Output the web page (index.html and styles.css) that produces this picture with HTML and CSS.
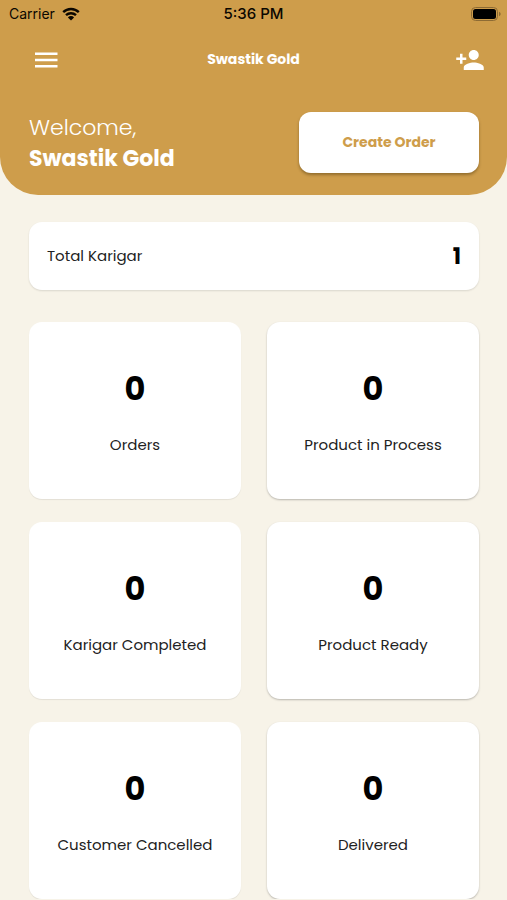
FILE: index.html
```html
<!DOCTYPE html>
<html lang="en">
<head>
<meta charset="utf-8">
<meta name="viewport" content="width=device-width, initial-scale=1">
<title>Swastik Gold</title>
<link rel="stylesheet" href="styles.css">
</head>
<body>
<header class="hero">
  <div class="status">
    <div class="carrier">
      <span>Carrier</span>
      <svg class="wifi" viewBox="0 0 18 14" aria-hidden="true">
        <path d="M1.2 5.2a11.2 11.2 0 0 1 15.6 0M4 8.2a7.2 7.2 0 0 1 10 0" fill="none" stroke="#0b0700" stroke-width="2.4"/>
        <path d="M9 13.4 5.9 10.4a4.4 4.4 0 0 1 6.2 0z" fill="#0b0700"/>
      </svg>
    </div>
    <span class="clock">5:36 PM</span>
    <svg class="battery" viewBox="0 0 30 14" aria-hidden="true">
      <rect x=".5" y=".5" width="26" height="13" rx="4" fill="none" stroke="#8d6b34"/>
      <rect x="2" y="2" width="23" height="10" rx="2.5" fill="#000"/>
      <path d="M28 4.8c2.2.8 2.2 3.6 0 4.4z" fill="#8d6b34"/>
    </svg>
  </div>
  <nav class="appbar">
    <button class="icon-button menu" type="button" aria-label="Menu">
      <svg class="menu-icon" viewBox="0 0 24 16" aria-hidden="true">
        <path d="M1 .5h22.5V3H1zM1 6.7h22.5v2.5H1zM1 13h22.5v2.5H1z" fill="#fff"/>
      </svg>
    </button>
    <h1 class="title">Swastik Gold</h1>
    <button class="icon-button add" type="button" aria-label="Add person">
      <svg class="person-icon" viewBox="1 4 22 16" aria-hidden="true">
        <path d="M15 12c2.21 0 4-1.79 4-4s-1.79-4-4-4-4 1.79-4 4 1.79 4 4 4zm-9-2V7H4v3H1v2h3v3h2v-3h3v-2H6zm9 4c-2.67 0-8 1.34-8 4v2h16v-2c0-2.66-5.33-4-8-4z" fill="#fff"/>
      </svg>
    </button>
  </nav>
  <div class="welcome">
    <p class="greeting">Welcome,<br><strong>Swastik Gold</strong></p>
    <button class="create" type="button">Create Order</button>
  </div>
</header>
<main class="content">
  <section class="total">
    <span class="label">Total Karigar</span>
    <strong class="total-value">1</strong>
  </section>
  <section class="grid">
    <a class="card" href="#orders"><strong class="count">0</strong><span class="label">Orders</span></a>
    <a class="card raised" href="#process"><strong class="count">0</strong><span class="label">Product in Process</span></a>
    <a class="card" href="#completed"><strong class="count">0</strong><span class="label">Karigar Completed</span></a>
    <a class="card raised" href="#ready"><strong class="count">0</strong><span class="label">Product Ready</span></a>
    <a class="card" href="#cancelled"><strong class="count">0</strong><span class="label">Customer Cancelled</span></a>
    <a class="card raised" href="#delivered"><strong class="count">0</strong><span class="label">Delivered</span></a>
  </section>
</main>
</body>
</html>
```
FILE: styles.css
```css
* {
  box-sizing: border-box;
}

body {
  margin: 0;
  background: #f7f3e8;
  color: #222;
  font-family: Poppins, Inter, "Open Sans", sans-serif;
}

button {
  border: 0;
  font: inherit;
  cursor: pointer;
}

svg {
  display: block;
}

.hero {
  padding-bottom: 21px;
  border-radius: 0 0 38px 38px;
  background: #ce9d4b;
  color: #fff;
}

.status {
  display: grid;
  grid-template-columns: 1fr auto 1fr;
  align-items: center;
  height: 27px;
  padding: 0 6px;
  color: #0b0700;
  font-family: Inter, sans-serif;
  font-size: 14px;
}

.carrier {
  display: flex;
  align-items: center;
  gap: 7px;
  padding-left: 3px;
}

.wifi {
  width: 18px;
  height: 14px;
}

.clock {
  font-size: 15px;
  font-weight: 500;
}

.battery {
  width: 30px;
  height: 14px;
  justify-self: end;
}

.appbar {
  display: grid;
  grid-template-columns: 1fr auto 1fr;
  align-items: center;
  height: 65px;
  padding: 0 23px;
}

.icon-button {
  padding: 0;
  background: none;
}

.menu {
  justify-self: start;
  padding-left: 11px;
}

.add {
  justify-self: end;
}

.menu-icon {
  width: 24px;
  height: 16px;
}

.person-icon {
  width: 28px;
  height: 20px;
}

.title {
  margin: 0;
  font-size: 14px;
  font-weight: 700;
}

.welcome {
  display: flex;
  align-items: flex-start;
  justify-content: space-between;
  padding: 20px 28px 0 29px;
}

.greeting {
  margin: 0;
  font-size: 22px;
  font-weight: 300;
  line-height: 31px;
}

.greeting strong {
  font-weight: 700;
}

.create {
  width: 40%;
  height: 61px;
  border-radius: 12px;
  background: #fff;
  box-shadow: 0 2px 3px rgba(60, 40, 0, 0.4);
  color: #ce9d4b;
  font-size: 14px;
  font-weight: 700;
}

.content {
  padding: 27px 28px 0 29px;
}

.total {
  display: flex;
  align-items: center;
  justify-content: space-between;
  height: 68px;
  margin-bottom: 32px;
  padding: 0 18px;
  border-radius: 13px;
  background: #fff;
  box-shadow: 0 1px 2px rgba(0, 0, 0, 0.12);
}

.label {
  font-size: 15px;
  line-height: 24px;
}

.total-value {
  color: #000;
  font-size: 22px;
}

.grid {
  display: grid;
  grid-template-columns: 1fr 1fr;
  gap: 23px 26px;
}

.card {
  display: flex;
  flex-direction: column;
  align-items: center;
  gap: 24px;
  height: 177px;
  padding-top: 47px;
  border-radius: 13px;
  background: #fff;
  box-shadow: 0 1px 1px rgba(0, 0, 0, 0.08);
  color: inherit;
  text-decoration: none;
}

.raised {
  box-shadow: 0 1px 2px rgba(0, 0, 0, 0.25);
}

.count {
  color: #000;
  font-size: 32px;
  line-height: 40px;
}
```
